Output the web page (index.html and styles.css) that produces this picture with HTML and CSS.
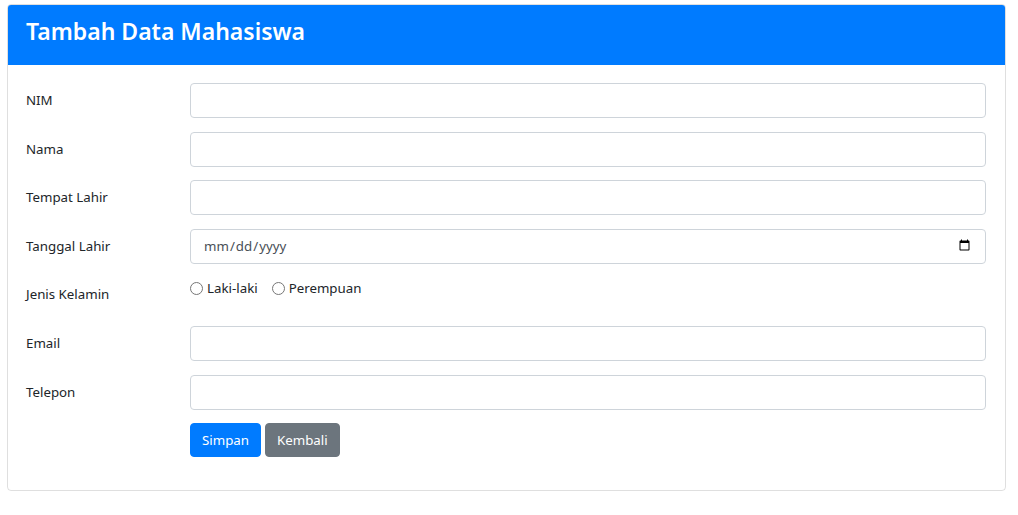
FILE: index.html
```html
<!DOCTYPE html>
<html>
<head>
<meta charset="utf-8">
<link rel="stylesheet" href="styles.css">
</head>
<body>
<div class="wrap">
  <div class="card">
    <div class="card-header"><h3 class="title">Tambah Data Mahasiswa</h3></div>
    <div class="card-body">
      <form>
        <div class="row"><label class="lbl">NIM</label><input class="ctl" type="text"></div>
        <div class="row"><label class="lbl">Nama</label><input class="ctl" type="text"></div>
        <div class="row"><label class="lbl">Tempat Lahir</label><input class="ctl" type="text"></div>
        <div class="row"><label class="lbl">Tanggal Lahir</label><input class="ctl" type="date"></div>
        <div class="row row-radio"><label class="lbl">Jenis Kelamin</label>
          <div class="radios">
            <label class="radio"><input type="radio" name="jk"> Laki-laki</label>
            <label class="radio"><input type="radio" name="jk"> Perempuan</label>
          </div>
        </div>
        <div class="row"><label class="lbl">Email</label><input class="ctl" type="email"></div>
        <div class="row"><label class="lbl">Telepon</label><input class="ctl" type="text"></div>
        <div class="row"><span class="lbl"></span>
          <div class="btns">
            <button type="button" class="btn btn-primary">Simpan</button>
            <button type="button" class="btn btn-secondary">Kembali</button>
          </div>
        </div>
      </form>
    </div>
  </div>
</div>
</body>
</html>
```
FILE: styles.css
```css
* { box-sizing: border-box; }
body {
  margin: 0;
  font-family: "Noto Sans", "Open Sans", sans-serif;
  font-size: 13.3px;
  color: #212529;
  background: #fff;
}
.wrap { padding: 4px 12px 0 7px; }
.card {
  border: 1px solid rgba(0,0,0,.125);
  border-radius: 4px;
  overflow: hidden;
}
.card-header {
  background: #007bff;
  color: #fff;
  height: 60px;
  padding: 13px 18px 0;
}
.title {
  margin: 0;
  font-size: 23px;
  font-weight: 600;
  line-height: 1.2;
}
.card-body { padding: 18px 19px 18px 18px; }
.row {
  display: flex;
  align-items: flex-start;
  margin-bottom: 13.5px;
}
.row-radio { margin-bottom: 14px; }
.lbl {
  width: 164px;
  flex: none;
  padding: 7px 0;
  line-height: 21px;
  min-height: 35px;
}
.ctl {
  flex: 1;
  height: 35px;
  border: 1px solid #ced4da;
  border-radius: 4px;
  padding: 6px 12px;
  font: inherit;
  color: #495057;
}
.radios {
  display: flex;
  gap: 14px;
  padding-top: 1px;
}
.radio {
  display: flex;
  align-items: center;
  gap: 4px;
  line-height: 21px;
}
.radio input { margin: 0; width: 13px; height: 13px; }
.btns { display: flex; gap: 4px; }
.btn {
  font: inherit;
  height: 34px;
  border: 1px solid transparent;
  border-radius: 4px;
  padding: 0 11px;
  color: #fff;
}
.btn-primary { background: #007bff; border-color: #007bff; }
.btn-secondary { background: #6c757d; border-color: #6c757d; }
```
